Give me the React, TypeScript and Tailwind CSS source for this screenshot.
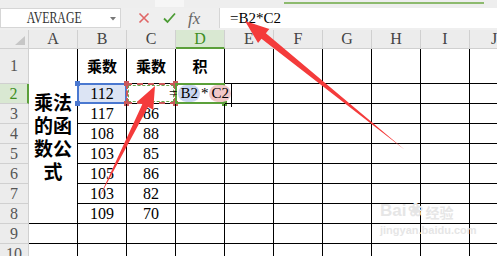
import React from "react";

const COLS = ["A", "B", "C", "D", "E", "F", "G", "H", "I", "J"];
const bData = ["112", "117", "108", "103", "105", "103", "109"];
const cData = ["", "86", "88", "85", "86", "82", "70"];

type Pt = [number, number];

function arrowPoints(tail: Pt, tip: Pt, headLen: number, headHalf: number, shaftHalf: number) {
  const dx = tip[0] - tail[0];
  const dy = tip[1] - tail[1];
  const len = Math.hypot(dx, dy);
  const ux = dx / len;
  const uy = dy / len;
  const nx = -uy;
  const ny = ux;
  const bx = tip[0] - ux * headLen;
  const by = tip[1] - uy * headLen;
  const pts: Pt[] = [
    tail,
    [bx + nx * shaftHalf, by + ny * shaftHalf],
    [bx + nx * headHalf, by + ny * headHalf],
    tip,
    [bx - nx * headHalf, by - ny * headHalf],
    [bx - nx * shaftHalf, by - ny * shaftHalf],
  ];
  return pts.map((p) => p.join(",")).join(" ");
}

function FormulaBar() {
  return (
    <div className="flex h-[22px] items-start bg-[#efefef]">
      <div className="relative flex h-[20px] w-[121px] items-center justify-center border border-[#d6d6d6] bg-white pr-[12px] text-[16px] text-[#333]">
        <span className="inline-block scale-x-[0.74]">AVERAGE</span>
        <svg className="absolute right-[4px] top-[8px]" width="6" height="4" viewBox="0 0 6 4">
          <path d="M0 0h6L3 3.5Z" fill="#777" />
        </svg>
      </div>
      <div className="flex h-[20px] w-[98px] items-center pl-[17px]">
        <svg width="12" height="12" viewBox="0 0 12 12">
          <path d="M1.5 1.5l9 9M10.5 1.5l-9 9" stroke="#e06666" strokeWidth="1.6" />
        </svg>
        <svg className="ml-[13px]" width="13" height="12" viewBox="0 0 13 12">
          <path d="M1 6.5l3.5 3.5L12 1.5" stroke="#4c9c35" strokeWidth="1.8" fill="none" />
        </svg>
        <span className="ml-[12px] text-[17px] italic leading-none text-[#666]">fx</span>
      </div>
      <div className="flex h-[20px] flex-1 items-center border-l border-[#d6d6d6] bg-white pl-[10px] text-[15px] text-black">
        <span>=B2*C2</span>
      </div>
    </div>
  );
}

function Sheet() {
  return (
    <div className="grid grid-cols-[29px_repeat(10,49px)] grid-rows-[19px_35px_repeat(9,20px)] text-[16px]">
      <div className="relative border-r border-b border-[#d0d0d0] bg-[#ececec]">
        <svg className="absolute right-[3px] bottom-[3px]" width="10" height="9" viewBox="0 0 10 9">
          <path d="M10 0v9H0Z" fill="#c6c6c6" />
        </svg>
      </div>
      {COLS.map((c) =>
        c === "D" ? (
          <div key={c} className="flex items-center justify-center border-r border-b-2 border-r-[#d0d0d0] border-b-[#5ba03a] bg-[#d9e8d2] text-[#3f8f1f]">
            {c}
          </div>
        ) : (
          <div key={c} className="flex items-center justify-center border-r border-b border-[#d0d0d0] bg-[#ececec] text-[#444]">
            {c}
          </div>
        ),
      )}

      {Array.from({ length: 10 }, (_, i) => i + 1).map((r) => {
        const cells: React.ReactNode[] = [];
        const hl = r === 2;
        cells.push(
          <div
            key={`h${r}`}
            className={
              hl
                ? "flex items-center justify-center border-r-2 border-b border-r-[#5ba03a] border-b-[#d0d0d0] bg-[#d9e8d2] text-[#3f8f1f]"
                : "flex items-center justify-center border-r border-b border-[#d0d0d0] bg-[#ececec] text-[#555]"
            }
          >
            {r}
          </div>,
        );
        if (r === 1) {
          cells.push(
            <div
              key="A"
              className="row-span-8 flex flex-col items-center justify-center border-r border-b border-black font-['Noto_Sans_CJK_SC',sans-serif] text-[19px] font-bold leading-[23px] text-black"
            >
              <span>乘法</span>
              <span>的函</span>
              <span>数公</span>
              <span>式</span>
            </div>,
          );
        } else if (r > 8) {
          cells.push(<div key="A" className="border-r border-b border-black" />);
        }
        COLS.slice(1).forEach((c) => {
          const key = `${c}${r}`;
          let content: React.ReactNode = null;
          let extra = "";
          if (r === 1 && (c === "B" || c === "C")) {
            content = <span className="font-['Noto_Sans_CJK_SC',sans-serif] text-[15px] font-bold">乘数</span>;
          } else if (r === 1 && c === "D") {
            content = <span className="font-['Noto_Sans_CJK_SC',sans-serif] text-[15px] font-bold">积</span>;
          } else if (r >= 2 && r <= 8 && c === "B") {
            content = <span>{bData[r - 2]}</span>;
          } else if (r >= 3 && r <= 8 && c === "C") {
            content = <span>{cData[r - 2]}</span>;
          }
          if (key === "B2") {
            extra = "bg-[#dce4f4]";
            content = (
              <>
                <span>112</span>
                <div className="absolute -inset-[1px] border-2 border-[#4a78d0]" />
                <div className="absolute -left-[3px] -top-[3px] size-[5px] bg-[#4a78d0]" />
                <div className="absolute -left-[3px] -bottom-[3px] size-[5px] bg-[#4a78d0]" />
              </>
            );
          }
          if (key === "C2") {
            content = (
              <>
                <div className="absolute -inset-[1px] border-2 border-dashed border-[#c9585a]" />
                <div className="absolute inset-[1px] border border-dashed border-[#6aa84f]" />
                <div className="absolute -left-[3px] -top-[3px] size-[5px] bg-[#c9585a]" />
                <div className="absolute -right-[3px] -top-[3px] size-[5px] bg-[#c9585a]" />
                <div className="absolute -left-[3px] -bottom-[3px] size-[5px] bg-[#c9585a]" />
                <div className="absolute -right-[3px] -bottom-[3px] size-[5px] bg-[#c9585a]" />
              </>
            );
          }
          if (key === "D2") {
            extra = "border-r-transparent";
            content = (
              <>
                <div className="absolute -inset-[1px] border-2 border-[#5ba03a]" />
                <div className="absolute -right-[3px] -bottom-[3px] size-[5px] bg-[#5ba03a]" />
                <div className="absolute -top-[1px] right-[-8px] bottom-[-4px] flex items-center border-r border-black pb-[3px] text-[15px] text-black">
                  <span>=</span>
                  <span className="ml-[1px] rounded-full bg-[#c8d5f0] px-[2px] leading-[17px]">B2</span>
                  <span className="mx-[1px]">*</span>
                  <span className="rounded-full bg-[#f1c8c8] px-[2px] leading-[17px]">C2</span>
                </div>
              </>
            );
          }
          cells.push(
            <div key={key} className={`relative flex items-center justify-center border-r border-b border-black text-black ${extra}`}>
              {content}
            </div>,
          );
        });
        return <React.Fragment key={r}>{cells}</React.Fragment>;
      })}
    </div>
  );
}

export default function App() {
  return (
    <div className="relative h-[256px] w-[497px] overflow-hidden bg-white font-['Liberation_Serif',serif]">
      <div className="relative h-[8px] bg-[#eeeeee]">
        <div className="absolute left-[155px] top-0 h-[7px] w-[29px] bg-[#f6f6f6]" />
        <div className="absolute left-[284px] top-[2px] h-[2px] w-[200px] bg-[#8dba6e]" />
      </div>
      <FormulaBar />
      <Sheet />

      <div className="pointer-events-none absolute left-[380px] top-[201px] flex flex-col font-['Liberation_Sans',sans-serif] font-bold text-[#e6e6e6]">
        <div className="flex items-end leading-none">
          <span className="text-[17px]">Bai</span>
          <span className="mx-[2px] text-[18px]">❀</span>
          <span className="font-['Noto_Sans_CJK_SC',sans-serif] text-[14px]">经验</span>
        </div>
        <span className="mt-[6px] text-[11px] leading-none">jingyan.baidu.com</span>
      </div>

      <svg className="pointer-events-none absolute inset-0" width="497" height="256">
        <polygon points={arrowPoints([405, 150], [245, 21], 24, 9, 3.5)} fill="#f43b3b" />
        <polygon points={arrowPoints([99, 198], [155, 86], 22, 9, 3.2)} fill="#f43b3b" />
      </svg>
    </div>
  );
}
